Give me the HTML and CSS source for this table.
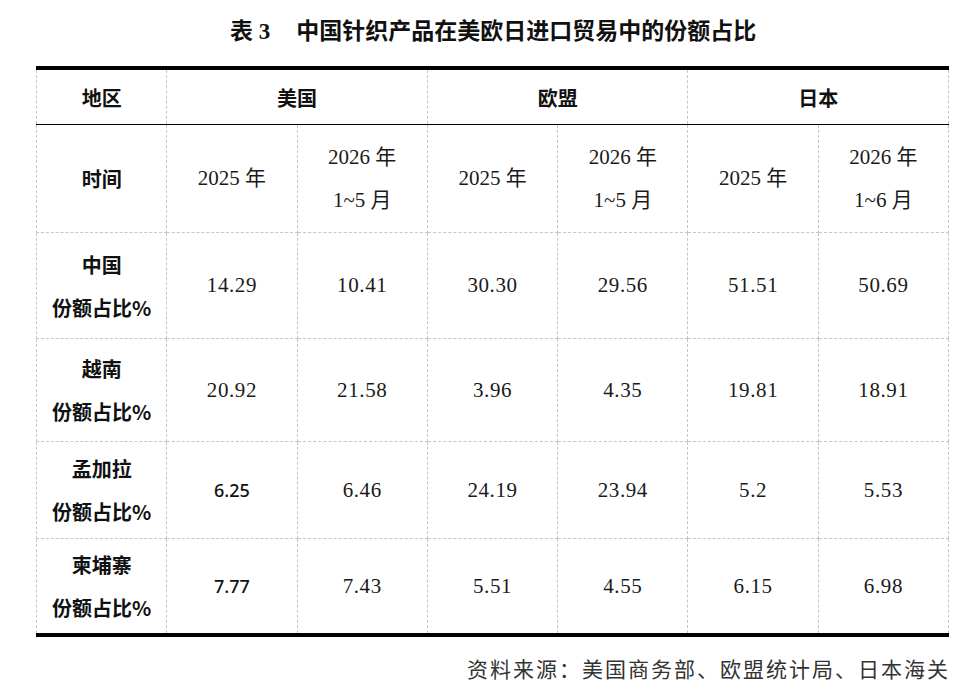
FILE: index.html
```html
<!DOCTYPE html>
<html lang="zh">
<head>
<meta charset="utf-8">
<title>表3</title>
<link rel="stylesheet" href="styles.css">
</head>
<body>
<div class="page">
  <h1 class="title">表 3<span class="gap"></span>中国针织产品在美欧日进口贸易中的份额占比</h1>
  <table class="data">
    <colgroup>
      <col><col><col><col><col><col><col>
    </colgroup>
    <tr class="r1">
      <th>地区</th>
      <th colspan="2">美国</th>
      <th colspan="2">欧盟</th>
      <th colspan="2">日本</th>
    </tr>
    <tr class="r2">
      <th>时间</th>
      <td>2025 年</td>
      <td>2026 年<br>1~5 月</td>
      <td>2025 年</td>
      <td>2026 年<br>1~5 月</td>
      <td>2025 年</td>
      <td>2026 年<br>1~6 月</td>
    </tr>
    <tr class="r3">
      <th>中国<br>份额占比%</th>
      <td class="num">14.29</td>
      <td class="num">10.41</td>
      <td class="num">30.30</td>
      <td class="num">29.56</td>
      <td class="num">51.51</td>
      <td class="num">50.69</td>
    </tr>
    <tr class="r4">
      <th>越南<br>份额占比%</th>
      <td class="num">20.92</td>
      <td class="num">21.58</td>
      <td class="num">3.96</td>
      <td class="num">4.35</td>
      <td class="num">19.81</td>
      <td class="num">18.91</td>
    </tr>
    <tr class="r5">
      <th>孟加拉<br>份额占比%</th>
      <td class="alt">6.25</td>
      <td class="num">6.46</td>
      <td class="num">24.19</td>
      <td class="num">23.94</td>
      <td class="num">5.2</td>
      <td class="num">5.53</td>
    </tr>
    <tr class="r6">
      <th>柬埔寨<br>份额占比%</th>
      <td class="alt">7.77</td>
      <td class="num">7.43</td>
      <td class="num">5.51</td>
      <td class="num">4.55</td>
      <td class="num">6.15</td>
      <td class="num">6.98</td>
    </tr>
  </table>
  <p class="source">资料来源：美国商务部、欧盟统计局、日本海关</p>
</div>
</body>
</html>
```

FILE: styles.css
```css
html, body {
  margin: 0;
  padding: 0;
  background: #fff;
}

.page {
  width: 912px;
  margin-left: 36px;
  padding-top: 18px;
  font-family: "Liberation Serif", "Noto Sans CJK SC", serif;
  color: #111;
}

.title {
  margin: 0;
  height: 28px;
  line-height: 28px;
  text-align: center;
  font-family: "Liberation Serif", "Noto Sans CJK SC", serif;
  font-size: 23px;
  font-weight: 700;
  color: #111;
  padding-left: 2px;
}

.title .gap {
  display: inline-block;
  width: 26px;
}

.data {
  margin-top: 20px;
  width: 912px;
  table-layout: fixed;
  border-collapse: collapse;
  border-top: 4px solid #000;
  border-bottom: 4px solid #000;
}

.data col {
  width: 130.3px;
}

.data th,
.data td {
  border-left: 1px dashed #c6c6c6;
  border-right: 1px dashed #c6c6c6;
  border-bottom: 1px dashed #c6c6c6;
  text-align: center;
  vertical-align: middle;
  padding: 0;
  line-height: 43px;
}

.data th {
  font-family: "Noto Sans CJK SC", sans-serif;
  font-weight: 700;
  font-size: 20px;
  color: #111;
}

.data td {
  font-family: "Liberation Serif", "Noto Sans CJK SC", serif;
  font-size: 21px;
  font-weight: 400;
  color: #1a1a1a;
}

.data .num {
  letter-spacing: 0.6px;
}

.data .alt {
  font-family: "Noto Sans", sans-serif;
  font-size: 18px;
  font-weight: 500;
  color: #111;
}

.r1 th {
  height: 54px;
  border-bottom: 1px solid #000;
}

.r2 th, .r2 td { height: 107px; }
.r3 th, .r3 td { height: 105px; }
.r4 th, .r4 td { height: 102px; }
.r5 th, .r5 td { height: 96px; }
.r6 th, .r6 td { height: 94px; border-bottom: none; }

.source {
  margin: 17px 0 0 0;
  text-align: right;
  font-family: "Noto Sans CJK SC", sans-serif;
  font-size: 21px;
  letter-spacing: 2px;
  margin-right: -2px;
  line-height: 28px;
  color: #333;
}
```
